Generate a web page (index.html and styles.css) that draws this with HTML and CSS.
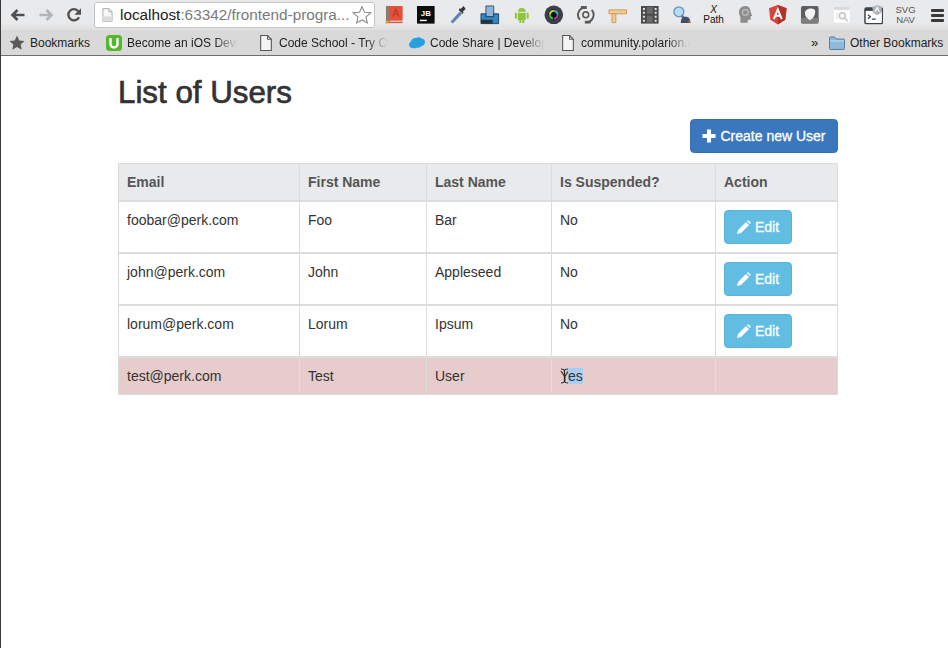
FILE: index.html
```html
<!DOCTYPE html>
<html>
  <head>
    <meta charset="UTF-8" />
    <title>List of Users</title>
    <link rel="stylesheet" href="styles.css">
  </head>
  <body>
    <div class="window">
      <div class="toolbar">
        <div class="nav">
          <svg class="nav-icon" viewBox="0 0 16 16"><path d="M14.5 8H3M7.5 3L2.5 8l5 5" fill="none" stroke="#4f4f4f" stroke-width="2.6"/></svg>
          <svg class="nav-icon" viewBox="0 0 16 16"><path d="M1.5 8H13M8.5 3l5 5-5 5" fill="none" stroke="#b4b4b4" stroke-width="2.6"/></svg>
          <svg class="nav-icon" viewBox="0 0 16 16"><path d="M13 10.2A5.6 5.6 0 1 1 12.3 4.2" fill="none" stroke="#4f4f4f" stroke-width="2.4"/><path d="M15 1.2v6.6H8.4z" fill="#4f4f4f"/></svg>
        </div>
        <div class="omnibox">
          <svg class="page-icon" viewBox="0 0 12 15"><path d="M1 .5h6.5L11 4v10.500H1z" fill="#f7f7f7" stroke="#a8a8a8"/><path d="M7.500.5V4H11" fill="none" stroke="#a8a8a8"/><path d="M1 9h10v5.500H1z" fill="#dcdcdc"/></svg>
          <span class="url"><span class="host">localhost</span>:63342/frontend-progra...</span>
          <svg class="star" viewBox="0 0 20 20"><path d="M10 1.500l2.500 5.700 6.200.6-4.700 4.100 1.400 6.100L10 14.900l-5.400 3.100L6 11.900 1.300 7.800l6.200-.6z" fill="#fff" stroke="#8c8c8c" stroke-width="1.100"/></svg>
        </div>
        <div class="extensions">
          <svg class="ext" viewBox="0 0 20 20"><path d="M2 1h4v16H2z" fill="#8b7c70"/><path d="M5 1h14v15H5z" fill="#e2513a"/><path d="M9 12l3-8 3 8M10 9.500h4" fill="none" stroke="#c63c28" stroke-width="1.500"/><path d="M2 17h17v1.500H2z" fill="#d9534a"/><path d="M1.500 16h3v3h-3z" fill="#eaa92c"/></svg>
          <svg class="ext" viewBox="0 0 20 20"><path d="M1 1h18v18H1z" fill="#0b0b0b"/><path d="M4 15h7v1.500H4z" fill="#fff"/><text class="jb" x="10" y="11">JB</text></svg>
          <svg class="ext" viewBox="0 0 20 20"><path d="M3 17l9-10 2 2-9 9.500z" fill="#4b83c4" stroke="#8a97a6"/><path d="M11 5l4 4 1-1-1-1 3-3-2-3-3 3-1-1z" fill="#33363a"/></svg>
          <svg class="ext" viewBox="0 0 20 20"><path d="M6 1h8v11H6z" fill="#8fb4d9" stroke="#3f5568"/><path d="M1 9h5v3h8V9h5v10H1z" fill="#2f87c9" stroke="#1f4560"/><path d="M1 15h12v4H1z" fill="#24333f"/></svg>
          <svg class="ext" viewBox="0 0 20 20"><g fill="#8fc43d"><path d="M6 7a4 4 0 0 1 8 0z"/><path d="M6 8h8v7.500H6z"/><path d="M3 8h2v6H3zM15 8h2v6h-2zM7.500 15h2v3.500h-2zM10.500 15h2v3.500h-2z"/></g></svg>
          <svg class="ext" viewBox="0 0 20 20"><circle cx="10" cy="10" r="9.500" fill="#3a4048"/><circle cx="10" cy="10" r="5.500" fill="#111"/><circle cx="10" cy="10" r="4" fill="none" stroke="#c13ab0" stroke-width="2" stroke-dasharray="6 19"/><circle cx="10" cy="10" r="4" fill="none" stroke="#2bc0c8" stroke-width="2" stroke-dasharray="6 19" stroke-dashoffset="6"/><circle cx="10" cy="10" r="4" fill="none" stroke="#d9d02e" stroke-width="2" stroke-dasharray="6 19" stroke-dashoffset="12"/><circle cx="10" cy="10" r="4" fill="none" stroke="#3fc04a" stroke-width="2" stroke-dasharray="6 19" stroke-dashoffset="18"/></svg>
          <svg class="ext" viewBox="0 0 20 20"><path d="M4 15A7.500 7.500 0 0 1 10 2.500M16 5a7.500 7.500 0 0 1-6 12.500" fill="none" stroke="#5a5a5a" stroke-width="2"/><path d="M5 1h6v3H5zM9 16h6v3H9z" fill="#5a5a5a"/><circle cx="10" cy="10" r="3" fill="none" stroke="#5a5a5a" stroke-width="1.600"/></svg>
          <svg class="ext" viewBox="0 0 20 20"><path d="M1 5h18v4H1z" fill="#eeca95" stroke="#d29a55"/><path d="M4 9h4v9H4z" fill="#eeca95" stroke="#d29a55"/></svg>
          <svg class="ext" viewBox="0 0 20 20"><path d="M1 1h18v18H1z" fill="#4a4a4a"/><path d="M7 2h6v7H7zM7 11h6v7H7z" fill="#6a6a6a"/><path d="M3 3h2v2H3zM3 7h2v2H3zM3 11h2v2H3zM3 15h2v2H3zM15 3h2v2h-2zM15 7h2v2h-2zM15 11h2v2h-2zM15 15h2v2h-2z" fill="#e4e4e4"/></svg>
          <svg class="ext" viewBox="0 0 20 20"><circle cx="7" cy="7" r="5" fill="#b9dcf2" stroke="#6a9cc4" stroke-width="1.500"/><path d="M10 11l4 4" stroke="#5a6f88" stroke-width="2.500"/><path d="M9 17c0-3 2-5 5-5s5 2 4.500 6.500H9z" fill="#3f5068"/><path d="M17 16l2 2" stroke="#c8654a" stroke-width="1.500"/></svg>
          <div class="ext xpath"><i>X</i><span>Path</span></div>
          <svg class="ext" viewBox="0 0 20 20"><path d="M9.500 1C5 1 3 4.500 3 7.500c0 2 1 3.500 1.500 5V18H12v-3h3v-3.500l1.500-.5-1.500-3.500C15 3.500 13 1 9.500 1z" fill="#8c8c8c"/><circle cx="9.500" cy="7.500" r="3" fill="none" stroke="#b8b8b8" stroke-width="1.500"/></svg>
          <svg class="ext" viewBox="0 0 20 20"><path d="M10 0l9 3.200-1.400 11.800L10 20l-7.600-5L1 3.200z" fill="#d6463a"/><path d="M10 0l9 3.200-1.400 11.800L10 20z" fill="#b1322a"/><path d="M6 14.500l4-10 4 10M7.500 11h5" fill="none" stroke="#fff" stroke-width="2"/></svg>
          <svg class="ext" viewBox="0 0 20 20"><rect x="1" y="1" width="18" height="18" rx="2" fill="#5e5e5e"/><path d="M1 13h18v4a2 2 0 0 1-2 2H3a2 2 0 0 1-2-2z" fill="#7d7d7d"/><path d="M11 3.500c3 0 4.500 1 4.500 3 0 4.500-2.500 8-5.500 9-2.500-1-4.500-3.500-5-7C5 5 8 3.500 11 3.500z" fill="#f2f2f2"/></svg>
          <svg class="ext" viewBox="0 0 20 20"><path d="M2 2h16v16H2z" fill="#fff"/><path d="M2 2h16v3H2z" fill="#d8d8d8"/><circle cx="10.500" cy="11" r="3" fill="none" stroke="#c4c4c4" stroke-width="1.500"/><path d="M13 13.500l3 3" stroke="#c4c4c4" stroke-width="1.500"/><path d="M4 8h3v6H4z" fill="#eeeeee"/></svg>
          <svg class="ext" viewBox="0 0 20 20"><rect x="1" y="3" width="18" height="16" rx="1.500" fill="#fff" stroke="#3b434a" stroke-width="1.500"/><path d="M1 3h18v3H1z" fill="#3b434a"/><path d="M4 10l2.500 2L4 14M8 14.500h4" fill="none" stroke="#3b434a" stroke-width="1.300"/><path d="M13.500 0l5 1.800-.8 6.200-4.200 2.500L9.300 8l-.8-6.200z" fill="#aeb4b9"/><path d="M11.500 7l2-4.500 2 4.500" fill="none" stroke="#fff" stroke-width="1.200"/></svg>
          <div class="ext svgnav"><span>SVG</span><span>NAV</span></div>
          <div class="ext menu"><b></b><b></b><b></b></div>
        </div>
      </div>

      <div class="bookmarks">
        <div class="bm bm-main">
          <svg class="bm-icon" viewBox="0 0 16 16"><path d="M8 .5l2.300 5 5.200.5-3.900 3.500 1.200 5.300L8 12l-4.800 2.800 1.200-5.300L.5 6l5.200-.5z" fill="#5a5a5a"/></svg>
          <span>Bookmarks</span>
        </div>
        <div class="bm bm-ios">
          <svg class="bm-icon" viewBox="0 0 16 16"><rect width="16" height="16" rx="3.500" fill="#55b82c"/><path d="M4.500 3v6a3.500 3.500 0 0 0 7 0V3" fill="none" stroke="#fff" stroke-width="2.400"/></svg>
          <span class="fade">Become an iOS Deve</span>
        </div>
        <div class="bm bm-school">
          <svg class="bm-icon" viewBox="0 0 12 15"><path d="M1 .5h6.500L11 4v10.500H1z" fill="#f4f4f4" stroke="#555"/><path d="M7.500.5V4H11" fill="none" stroke="#555"/></svg>
          <span class="fade">Code School - Try Ol</span>
        </div>
        <div class="bm bm-share">
          <svg class="bm-icon" viewBox="0 0 16 12"><path d="M3.500 11C1.500 11 0 9.500 0 7.500 0 6 1 5 2 4.500 2.500 2 4.500.5 7 1c1.500-1 4-1 5.500.5 2 0 3.500 1.500 3.500 3.500s-1.500 4-3.500 4c-1 1.500-3 2-4.500 1.500-1 1-3 1-4.500.5z" fill="#27a0e0"/></svg>
          <span class="fade">Code Share | Develop</span>
        </div>
        <div class="bm bm-polarion">
          <svg class="bm-icon" viewBox="0 0 12 15"><path d="M1 .5h6.500L11 4v10.500H1z" fill="#f4f4f4" stroke="#555"/><path d="M7.500.5V4H11" fill="none" stroke="#555"/></svg>
          <span class="fade">community.polarion.c</span>
        </div>
        <span class="more">»</span>
        <div class="bm bm-other">
          <svg class="bm-icon" viewBox="0 0 16 14"><path d="M.5 2a1 1 0 0 1 1-1h4l1.500 2h7.500a1 1 0 0 1 1 1v8.500a1 1 0 0 1-1 1h-13a1 1 0 0 1-1-1z" fill="#8db9dc" stroke="#5a7d9b"/><path d="M1 5h14" stroke="#c9e0f0"/></svg>
          <span>Other Bookmarks</span>
        </div>
      </div>

      <div class="container">
        <h1 class="title">List of Users</h1>
        <div class="actions">
          <button class="btn btn-primary">
            <svg class="btn-icon" viewBox="0 0 14 14"><path d="M5 .5h4v4.500h4.500v4H9v4.500H5V9H.5V5H5z" fill="#fff"/></svg>
            Create new User
          </button>
        </div>
        <table class="users">
          <colgroup>
            <col class="col-email">
            <col class="col-first">
            <col class="col-last">
            <col class="col-suspended">
            <col class="col-action">
          </colgroup>
          <thead>
            <tr>
              <th>Email</th>
              <th>First Name</th>
              <th>Last Name</th>
              <th>Is Suspended?</th>
              <th>Action</th>
            </tr>
          </thead>
          <tbody>
            <tr>
              <td>foobar@perk.com</td>
              <td>Foo</td>
              <td>Bar</td>
              <td>No</td>
              <td><button class="btn btn-info"><svg class="btn-icon" viewBox="0 0 14 14"><path d="M0 14l1-4 8-8 3 3-8 8zM10 1l1-1 3 3-1 1z" fill="#fff"/></svg> Edit</button></td>
            </tr>
            <tr>
              <td>john@perk.com</td>
              <td>John</td>
              <td>Appleseed</td>
              <td>No</td>
              <td><button class="btn btn-info"><svg class="btn-icon" viewBox="0 0 14 14"><path d="M0 14l1-4 8-8 3 3-8 8zM10 1l1-1 3 3-1 1z" fill="#fff"/></svg> Edit</button></td>
            </tr>
            <tr>
              <td>lorum@perk.com</td>
              <td>Lorum</td>
              <td>Ipsum</td>
              <td>No</td>
              <td><button class="btn btn-info"><svg class="btn-icon" viewBox="0 0 14 14"><path d="M0 14l1-4 8-8 3 3-8 8zM10 1l1-1 3 3-1 1z" fill="#fff"/></svg> Edit</button></td>
            </tr>
            <tr class="suspended">
              <td>test@perk.com</td>
              <td>Test</td>
              <td>User</td>
              <td><span class="yes">Y<span class="selected">es</span><svg class="ibeam" viewBox="0 0 9 16"><path d="M1 1c2 0 3 .5 3.500 1.500C5 1.500 6 1 8 1M4.500 2.500v11M1 15c2 0 3-.5 3.500-1.500C5 14.500 6 15 8 15" fill="none" stroke="#222" stroke-width="1.100"/></svg></span></td>
              <td></td>
            </tr>
          </tbody>
        </table>
      </div>
    </div>
  </body>
</html>
```

FILE: styles.css
```css
html, body {
  margin: 0;
  height: 100%;
  overflow: hidden;
}
body {
  font-family: "Liberation Sans", Arial, sans-serif;
  background: #fff;
  color: #333;
}
.window {
  height: 648px;
  border-left: 1px solid #3a3a3a;
  box-sizing: border-box;
}

/* Browser toolbar */
.toolbar {
  display: flex;
  align-items: center;
  height: 30px;
  background: linear-gradient(#e9eaec 0, #e9eaec 22px, #e2dedd 30px);
}
.nav {
  display: flex;
  align-items: center;
  gap: 12px;
  padding-left: 9px;
  width: 84px;
}
.nav-icon {
  width: 16px;
  height: 16px;
}
.omnibox {
  display: flex;
  align-items: center;
  box-sizing: border-box;
  width: 281px;
  height: 26px;
  margin-top: -1px;
  padding-left: 7px;
  background: #fff;
  border: 1px solid #c4c4c4;
  border-radius: 3px;
}
.page-icon {
  width: 11px;
  height: 14px;
  margin-right: 7px;
}
.url {
  font-size: 15.300px;
  color: #7a7a7a;
  white-space: nowrap;
  width: 232px;
}
.host {
  color: #222;
}
.star {
  width: 20px;
  height: 20px;
}
.extensions {
  display: flex;
  align-items: center;
  padding-left: 9px;
  gap: 12.400px;
}
.ext {
  width: 19.600px;
  height: 19.600px;
  flex: none;
}
.jb {
  font-size: 8px;
  font-weight: bold;
  fill: #fff;
  text-anchor: middle;
}
.xpath {
  display: flex;
  flex-direction: column;
  align-items: center;
  font-size: 10px;
  line-height: 10px;
  color: #111;
}
.svgnav {
  display: flex;
  flex-direction: column;
  align-items: center;
  font-size: 9.500px;
  line-height: 10px;
  color: #555;
}
.menu {
  display: flex;
  flex-direction: column;
  justify-content: center;
  gap: 2px;
}
.menu b {
  display: block;
  height: 3px;
  margin: 0 3px;
  background: #3a3a3a;
  border-radius: 1px;
}

/* Bookmarks bar */
.bookmarks {
  display: flex;
  align-items: center;
  box-sizing: border-box;
  height: 26px;
  background: #d9d9d9;
  border-bottom: 1px solid #6e6e6e;
  font-size: 12px;
  color: #222;
  white-space: nowrap;
}
.bm {
  display: flex;
  align-items: center;
  gap: 5px;
  flex: none;
  overflow: hidden;
}
.bm-icon {
  width: 16px;
  height: 16px;
  flex: none;
}
.bm-main {
  width: 97px;
  padding-left: 8px;
  box-sizing: border-box;
}
.bm-ios {
  width: 136px;
  margin-left: 8px;
}
.bm-school {
  width: 134px;
  margin-left: 16px;
}
.bm-share {
  width: 141px;
  margin-left: 17px;
}
.bm-polarion {
  width: 134px;
  margin-left: 10px;
}
.fade {
  flex: 1;
  overflow: hidden;
  -webkit-mask-image: linear-gradient(to right, #000 76%, transparent 96%);
  mask-image: linear-gradient(to right, #000 76%, transparent 96%);
}
.more {
  margin-left: 117px;
  width: 18px;
  font-size: 13px;
}
.bm-other {
  width: 118px;
}

/* Page */
.container {
  width: 719px;
  margin-left: 117px;
}
.title {
  margin: 19px 0 8px;
  font-size: 31.300px;
  line-height: 36px;
  font-weight: normal;
  -webkit-text-stroke: 0.7px #333;
}
.actions {
  display: flex;
  justify-content: flex-end;
  margin-right: -1px;
  margin-bottom: 10px;
}
.btn {
  display: inline-flex;
  align-items: center;
  justify-content: center;
  gap: 4px;
  box-sizing: border-box;
  height: 34px;
  border: 1px solid transparent;
  border-radius: 4px;
  font-family: inherit;
  font-size: 14px;
  color: #fff;
  -webkit-text-stroke: 0.3px #fff;
}
.btn-icon {
  width: 14px;
  height: 14px;
}
.btn-primary {
  width: 148px;
  background: #3a77bd;
  border-color: #3670b3;
}
.btn-info {
  width: 68px;
  background: #62bde3;
  border-color: #57b3db;
}

.users {
  width: 719px;
  table-layout: fixed;
  border-collapse: collapse;
  font-size: 14px;
  line-height: 20px;
}
.col-email { width: 181px; }
.col-first { width: 127px; }
.col-last { width: 125px; }
.col-suspended { width: 164px; }
.col-action { width: 122px; }

.users th,
.users td {
  padding: 8px;
  border: 1px solid #dcdcdc;
  text-align: left;
  vertical-align: top;
}
.users th {
  height: 20px;
  background: #e9eaec;
  border-bottom: 2px solid #dcdcdc;
  color: #555;
}
.users tbody tr {
  border-top: 2px solid #dcdcdc;
}
.users .suspended td {
  background: #e7cccc;
  color: #333;
}
.yes {
  position: relative;
  display: inline-block;
}
.selected {
  background: #a9cdf3;
}
.ibeam {
  position: absolute;
  left: 0;
  top: 2px;
  width: 9px;
  height: 16px;
}
```
